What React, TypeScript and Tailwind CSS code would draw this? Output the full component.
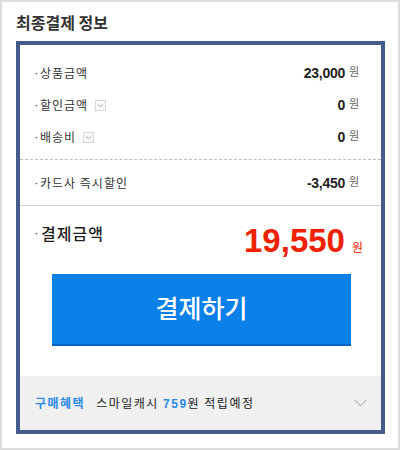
import React from "react";

const ko = "font-['Noto_Sans_CJK_KR',sans-serif]";
const num = "font-['Liberation_Sans',Arial,sans-serif]";

function DropBox() {
  return (
    <span className="ml-[7px] inline-flex h-[11px] w-[11px] items-center justify-center border border-[#d6d6d6] bg-[#f8f8f8]">
      <svg width="7" height="5" viewBox="0 0 7 5">
        <path d="M1 1.5 L3.5 3.5 L6 1.5" fill="none" stroke="#a8a8a8" strokeWidth="1" />
      </svg>
    </span>
  );
}

function PriceRow({ label, value, drop }: { label: string; value: string; drop?: boolean }) {
  return (
    <div className="flex h-[32px] items-center justify-between">
      <div className="flex items-center text-[12px] text-[#333]">
        <span className="w-[5px] text-[10px] leading-none">·</span>
        <span className={`${ko} leading-[16px] tracking-[1px]`}>{label}</span>
        {drop && <DropBox />}
      </div>
      <div className="flex items-start">
        <span className={`${num} text-[14px] font-bold leading-[18px] tracking-[-0.3px] text-[#222]`}>{value}</span>
        <span className={`${ko} ml-[4px] text-[11px] leading-[14px] text-[#666]`}>원</span>
      </div>
    </div>
  );
}

export default function App() {
  return (
    <div className="h-[450px] w-[400px] border-2 border-[#dddddd] bg-white pl-[14px] pr-[13px]">
      <h2 className={`${ko} pt-[8px] pb-[7px] text-[16px] font-bold leading-[24px] text-[#333]`}>
        최종결제 정보
      </h2>

      <div className="border-4 border-[#455c8a] bg-white">
        {/* 상품 금액 목록 */}
        <div className="px-[15px] pr-[22px] pt-[12px] pb-[6px]">
          <PriceRow label="상품금액" value="23,000" />
          <PriceRow label="할인금액" value="0" drop />
          <PriceRow label="배송비" value="0" drop />
        </div>
        <div className="border-t border-dashed border-[#bdbdbd]" />
        <div className="border-b border-[#cdd1d8] px-[15px] pr-[22px]">
          <div className="flex h-[45px] items-center justify-between">
            <div className="flex items-center text-[12px] text-[#333]">
              <span className="w-[5px] text-[10px] leading-none">·</span>
              <span className={`${ko} leading-[16px] tracking-[1px]`}>카드사 즉시할인</span>
            </div>
            <div className="flex items-start">
              <span className={`${num} text-[14px] font-bold leading-[18px] tracking-[-0.3px] text-[#222]`}>-3,450</span>
              <span className={`${ko} ml-[4px] text-[11px] leading-[14px] text-[#666]`}>원</span>
            </div>
          </div>
        </div>

        {/* 결제금액 + 버튼 */}
        <div className="px-[15px] pr-[18px] pt-[14px] pb-[30px]">
          <div className="flex items-start justify-between">
            <div className="flex items-center text-[#222]">
              <span className="w-[6px] text-[10px] leading-none">·</span>
              <span className={`${ko} text-[16px] font-medium leading-[26px] tracking-[1px]`}>결제금액</span>
            </div>
            <div className="mt-[3px] flex items-end">
              <span className={`${num} text-[33px] font-bold leading-[36px] text-[#ee2200]`}>19,550</span>
              <span className={`${ko} mb-[5px] ml-[7px] text-[12px] leading-[14px] text-[#ee2200]`}>원</span>
            </div>
          </div>
          <button
            className={`${ko} ml-[17px] mt-[15px] flex h-[72px] w-[299px] items-center justify-center border-b-2 border-[#0063c8] bg-[#0a80e8] pb-[2px] text-[25px] font-medium text-white`}
          >
            결제하기
          </button>
        </div>

        {/* 구매혜택 */}
        <div className={`${ko} flex h-[54px] items-center justify-between bg-[#f0f0f0] pl-[15px] pr-[14px] text-[12px] tracking-[1.5px]`}>
          <div className="flex items-center">
            <span className="font-bold text-[#2b8ae4]">구매혜택</span>
            <span className="ml-[11px] text-[#222]">
              스마일캐시 <b className={`${num} font-bold text-[#2b8ae4]`}>759</b>원 적립예정
            </span>
          </div>
          <svg width="13" height="8" viewBox="0 0 13 8">
            <path d="M0.5 0.8 L6.5 6.8 L12.5 0.8" fill="none" stroke="#9a9a9a" strokeWidth="1" />
          </svg>
        </div>
      </div>
    </div>
  );
}
